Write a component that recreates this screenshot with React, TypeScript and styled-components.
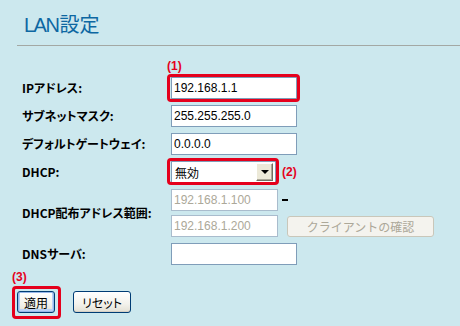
import React from "react";
import styled, { createGlobalStyle } from "styled-components";

const RED = "#e5001c";
const JP = `"Noto Sans CJK JP", "Liberation Sans", sans-serif`;
const LAT = `"Liberation Sans", "Noto Sans CJK JP", sans-serif`;

const Global = createGlobalStyle`
  html, body { margin: 0; padding: 0; background: #cce8ee; }
  body { font-family: ${LAT}; }
  * { box-sizing: border-box; }
`;

const Page = styled.div`
  width: 460px;
  height: 326px;
  overflow: hidden;
  background: #cce8ee;
  padding-top: 13px;
`;

const Title = styled.h1`
  margin: 0 0 8px 24px;
  font-family: ${LAT};
  font-size: 20px;
  line-height: 24px;
  font-weight: normal;
  color: #0d67a2;
`;

const Latin = styled.span`
  letter-spacing: -1.5px;
  margin-right: 1px;
`;

const Divider = styled.hr`
  margin: 0 0 0 17px;
  border: 0;
  border-top: 1px solid #a3a8a4;
  height: 0;
`;

const Form = styled.div`
  display: grid;
  grid-template-columns: 149px auto;
  row-gap: 6px;
  align-items: center;
  margin-top: 31px;
  padding-left: 22px;
`;

const Label = styled.div`
  font-family: ${JP};
  font-feature-settings: "palt";
  font-size: 12px;
  font-weight: 700;
  line-height: 22px;
  color: #000;
  white-space: nowrap;
`;

const Cell = styled.div`
  display: flex;
  align-items: center;
`;

const Annotated = styled.div<{ $inset: string }>`
  position: relative;
  display: inline-flex;
  &::after {
    content: "";
    position: absolute;
    inset: ${(p) => p.$inset};
    border: 3px solid ${RED};
    border-radius: 4px;
    pointer-events: none;
  }
`;

const Note = styled.span`
  font-family: ${LAT};
  font-size: 12px;
  font-weight: 700;
  line-height: 14px;
  color: ${RED};
`;

const NoteAbove = styled(Note)`
  position: absolute;
  left: -4px;
  top: -18px;
`;

const TextInput = styled.input<{ $w: number }>`
  width: ${(p) => p.$w}px;
  height: 22px;
  margin: 0;
  padding: 0 2px;
  border: 1px solid #7f9db9;
  background: #fff;
  font-family: ${LAT};
  font-size: 12px;
  color: #000;
  outline: none;
  &:disabled {
    border-color: #a9bccd;
    background: #fff;
    color: #aca899;
    -webkit-text-fill-color: #aca899;
  }
`;

const SelectBox = styled.div`
  width: 105px;
  height: 22px;
  border: 1px solid #7f9db9;
  background: #fff;
  display: flex;
  align-items: center;
  padding: 0 2px 0 3px;
  font-family: ${JP};
  font-size: 12px;
  color: #000;
`;

const SelectValue = styled.span`
  flex: 1;
`;

const SelectArrow = styled.span`
  width: 17px;
  height: 18px;
  background: #ece9d8;
  border-top: 1px solid #fff;
  border-left: 1px solid #fff;
  border-right: 1px solid #716f64;
  border-bottom: 1px solid #716f64;
  box-shadow: inset -1px -1px 0 #aca899;
  display: flex;
  align-items: center;
  justify-content: center;
  &::before {
    content: "";
    border-left: 4px solid transparent;
    border-right: 4px solid transparent;
    border-top: 4px solid #000;
  }
`;

const SideNote = styled(Note)`
  margin-left: 6px;
`;

const Range = styled.div`
  display: grid;
  grid-template-columns: 107px auto;
  row-gap: 4px;
  align-items: center;
`;

const Dash = styled.span`
  margin-left: 4px;
  width: 6px;
  height: 2px;
  background: #000;
`;

const ClientButton = styled.button`
  margin-left: 9px;
  width: 147px;
  height: 21px;
  padding: 0;
  border: 1px solid #c9c7ba;
  border-radius: 3px;
  background: #f4f3ee;
  font-family: ${JP};
  font-size: 12px;
  color: #aca899;
`;

const Footer = styled.div`
  margin-top: 2px;
  padding-left: 12px;
`;

const Buttons = styled.div`
  display: flex;
  align-items: center;
  margin-top: 6px;
  padding-left: 5px;
  gap: 18px;
`;

const Button = styled.button<{ $w: number; $focus?: boolean }>`
  width: ${(p) => p.$w}px;
  height: 22px;
  padding: 0;
  border: 1px solid #003c74;
  border-radius: 3px;
  background: linear-gradient(#ffffff, #f3f2ec 60%, #e3e0d4);
  box-shadow: ${(p) =>
    p.$focus ? "inset 0 0 0 1px #98b8ea, inset 0 -1px 0 2px #b9d1f6" : "inset 0 -1px 0 #d6d0c5"};
  font-family: ${JP};
  font-feature-settings: "palt";
  font-size: 12px;
  color: #000;
`;

export default function App() {
  return (
    <Page>
      <Global />
      <Title>
        <Latin>LAN</Latin>設定
      </Title>
      <Divider />
      <Form>
        <Label>IPアドレス:</Label>
        <Cell>
          <Annotated $inset="-3px -3px -3px -4px">
            <NoteAbove>(1)</NoteAbove>
            <TextInput $w={126} defaultValue="192.168.1.1" readOnly />
          </Annotated>
        </Cell>

        <Label>サブネットマスク:</Label>
        <Cell>
          <TextInput $w={126} defaultValue="255.255.255.0" readOnly />
        </Cell>

        <Label>デフォルトゲートウェイ:</Label>
        <Cell>
          <TextInput $w={126} defaultValue="0.0.0.0" readOnly />
        </Cell>

        <Label>DHCP:</Label>
        <Cell>
          <Annotated $inset="-3px -3px -2px -4px">
            <SelectBox>
              <SelectValue>無効</SelectValue>
              <SelectArrow />
            </SelectBox>
          </Annotated>
          <SideNote>(2)</SideNote>
        </Cell>

        <Label>DHCP配布アドレス範囲:</Label>
        <Range>
          <TextInput $w={107} defaultValue="192.168.1.100" disabled />
          <Dash />
          <TextInput $w={107} defaultValue="192.168.1.200" disabled />
          <ClientButton disabled>クライアントの確認</ClientButton>
        </Range>

        <Label>DNSサーバ:</Label>
        <Cell>
          <TextInput $w={126} defaultValue="" readOnly />
        </Cell>
      </Form>
      <Footer>
        <Note>(3)</Note>
        <Buttons>
          <Annotated $inset="-5px -6px -6px -5px">
            <Button $w={38} $focus>
              適用
            </Button>
          </Annotated>
          <Button $w={58}>リセット</Button>
        </Buttons>
      </Footer>
    </Page>
  );
}
